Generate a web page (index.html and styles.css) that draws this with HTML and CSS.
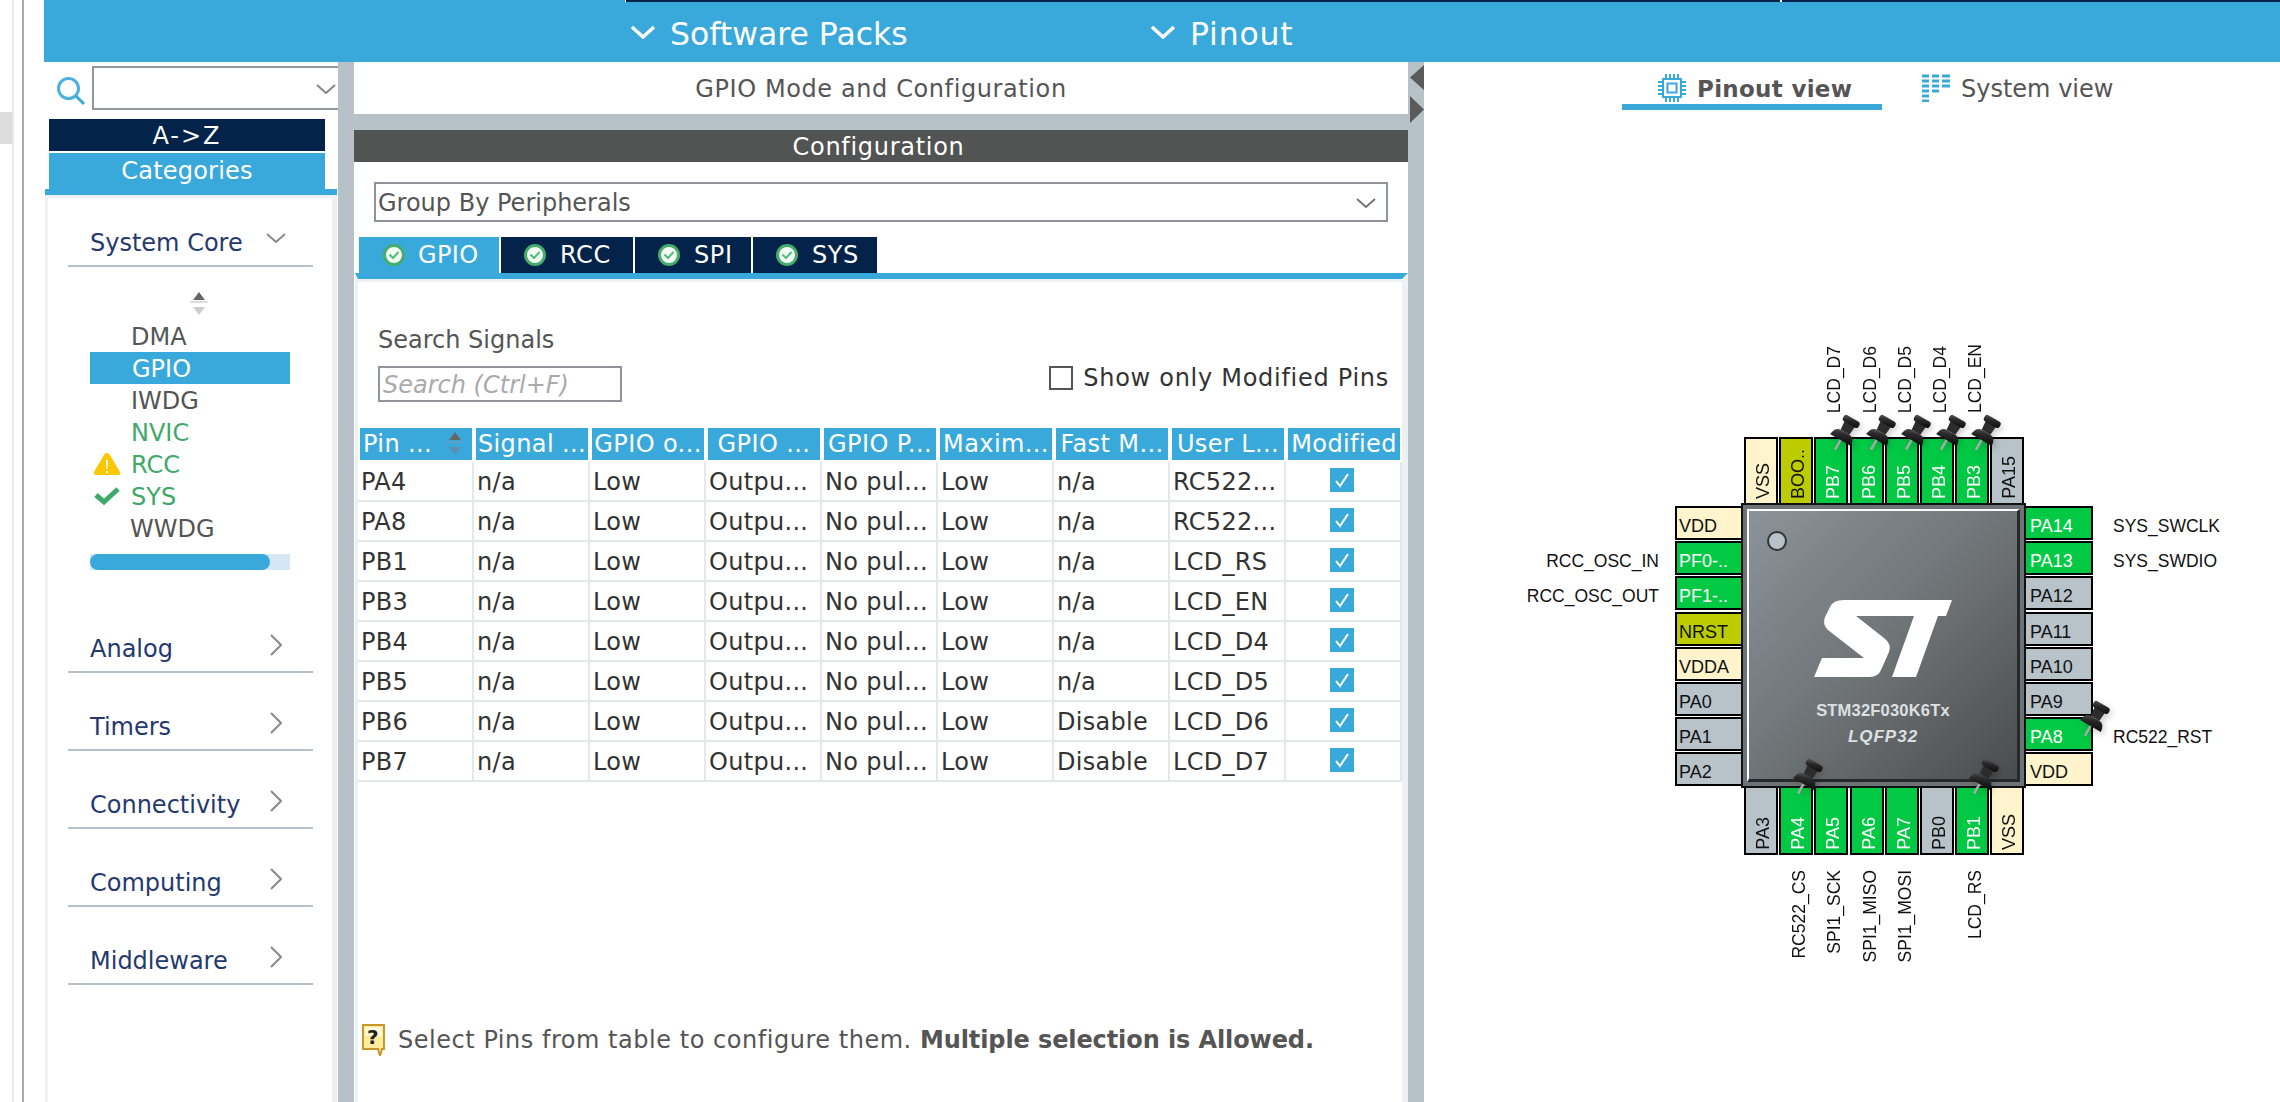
FILE: index.html
```html
<!DOCTYPE html>
<html lang="en">
<head>
<meta charset="utf-8">
<title>STM32CubeMX Pinout</title>
<link rel="stylesheet" href="styles.css">
</head>
<body>
<svg class="defs" width="0" height="0" aria-hidden="true">
  <defs>
    <linearGradient id="pinHead" x1="0" y1="0" x2="1" y2="1">
      <stop offset="0" stop-color="#5c5c5c"/><stop offset=".4" stop-color="#2a2a2a"/><stop offset="1" stop-color="#0a0a0a"/>
    </linearGradient>
    <symbol id="pushpin" viewBox="0 -2 34 38">
      <g transform="rotate(30 16 18)">
        <line x1="16" y1="24" x2="16" y2="36" stroke="#a8a8a8" stroke-width="2.500"/>
        <path d="M10 5H22L21 16H11Z" fill="#2c2c2c"/>
        <rect x="7" y="0" width="18" height="7" rx="3" fill="url(#pinHead)"/>
        <path d="M4 25Q5 16 11 16H21Q27 16 28 25Z" fill="url(#pinHead)"/>
      </g>
    </symbol>
    <symbol id="tabok" viewBox="0 0 22 22">
      <circle cx="11" cy="11" r="9.500" fill="#f2faf4" stroke="#45ad6c" stroke-width="3"/>
      <path d="M6.500 10.500L10 14L15.500 8" fill="none" stroke="#4fbe7b" stroke-width="2"/>
    </symbol>
    <symbol id="tick" viewBox="0 0 24 24">
      <rect width="24" height="24" fill="#39a9dc"/>
      <path d="M6 13L10 18L18 6" fill="none" stroke="#fff" stroke-width="2"/>
    </symbol>
    <symbol id="sortarrows" viewBox="0 0 18 24">
      <path d="M9 0L15 8H3Z" fill="#666"/>
      <path d="M0 9H18V11H0Z" fill="#ddd"/>
      <path d="M9 23L3 15H15Z" fill="#ccc"/>
    </symbol>
  </defs>
</svg>

<div class="page">
  <div class="edge"><div class="edge-stub"></div></div>
  <div class="app">
    <header class="topbar">
      <div class="topstrip"><span class="strip-a"></span><span class="strip-b"></span></div>
      <div class="topmenu">
        <div class="topitem topitem-sw">
          <svg class="topchev" viewBox="0 0 26 14"><path d="M2 2L13 12L24 2" fill="none" stroke="#fff" stroke-width="3.500"/></svg>
          <span>Software Packs</span>
        </div>
        <div class="topitem">
          <svg class="topchev" viewBox="0 0 26 14"><path d="M2 2L13 12L24 2" fill="none" stroke="#fff" stroke-width="3.500"/></svg>
          <span>Pinout</span>
        </div>
      </div>
    </header>

    <div class="workspace">
      <aside class="sidebar">
        <div class="searchrow">
          <svg class="searchicon" viewBox="0 0 30 30"><circle cx="12.500" cy="12.500" r="10" fill="none" stroke="#4cb0e0" stroke-width="3"/><path d="M20 20L28 28" stroke="#39a9dc" stroke-width="3"/></svg>
          <div class="sidecombo">
            <svg class="combochev" viewBox="0 0 20 10"><path d="M1 1L10 9L19 1" fill="none" stroke="#888" stroke-width="2"/></svg>
          </div>
        </div>
        <div class="sort-a">A-&gt;Z</div>
        <div class="sort-c">Categories</div>
        <div class="catpanel">
          <div class="cat cat-first">
            <span>System Core</span>
            <svg class="chev-down" viewBox="0 0 20 10"><path d="M1 1L10 9L19 1" fill="none" stroke="#8a8a8a" stroke-width="2"/></svg>
          </div>
          <svg class="listsort" viewBox="0 0 18 24"><use href="#sortarrows"/></svg>
          <ul class="periph">
            <li>DMA</li>
            <li class="sel">GPIO</li>
            <li>IWDG</li>
            <li class="ok">NVIC</li>
            <li class="ok">
              <svg class="mark" viewBox="0 0 26 22"><path d="M13 0Q15 0 16 2L26 19Q27 22 24 22H2Q-1 22 0 19L10 2Q11 0 13 0Z" fill="#fdc700"/><path d="M12 7H14L13.600 16H12.400ZM12 18H14V20H12Z" fill="#fff"/></svg>RCC
            </li>
            <li class="ok">
              <svg class="mark" viewBox="0 0 26 20"><path d="M2 9L10 16L24 3" fill="none" stroke="#3fa96a" stroke-width="5"/></svg>SYS
            </li>
            <li class="wide">WWDG</li>
          </ul>
          <div class="progress"><div class="progress-fill"></div></div>
          <div class="cat cat-analog"><span>Analog</span><svg class="chev-right" viewBox="0 0 12 22"><path d="M1 1L11 11L1 21" fill="none" stroke="#8a8a8a" stroke-width="2"/></svg></div>
          <div class="cat"><span>Timers</span><svg class="chev-right" viewBox="0 0 12 22"><path d="M1 1L11 11L1 21" fill="none" stroke="#8a8a8a" stroke-width="2"/></svg></div>
          <div class="cat"><span>Connectivity</span><svg class="chev-right" viewBox="0 0 12 22"><path d="M1 1L11 11L1 21" fill="none" stroke="#8a8a8a" stroke-width="2"/></svg></div>
          <div class="cat"><span>Computing</span><svg class="chev-right" viewBox="0 0 12 22"><path d="M1 1L11 11L1 21" fill="none" stroke="#8a8a8a" stroke-width="2"/></svg></div>
          <div class="cat"><span>Middleware</span><svg class="chev-right" viewBox="0 0 12 22"><path d="M1 1L11 11L1 21" fill="none" stroke="#8a8a8a" stroke-width="2"/></svg></div>
        </div>
      </aside>

      <div class="splitter"></div>

      <main class="middle">
        <div class="modetitle">GPIO Mode and Configuration</div>
        <div class="band"></div>
        <div class="confighead">Configuration</div>
        <div class="groupcombo">
          <span>Group By Peripherals</span>
          <svg class="groupchev" viewBox="0 0 20 10"><path d="M1 1L10 9L19 1" fill="none" stroke="#777" stroke-width="2"/></svg>
        </div>
        <div class="tabs">
          <div class="tab tab-gpio"><svg class="tabicon"><use href="#tabok"/></svg>GPIO</div>
          <div class="tab tab-rcc"><svg class="tabicon"><use href="#tabok"/></svg>RCC</div>
          <div class="tab tab-spi"><svg class="tabicon"><use href="#tabok"/></svg>SPI</div>
          <div class="tab tab-sys"><svg class="tabicon"><use href="#tabok"/></svg>SYS</div>
        </div>
        <section class="tabbody">
          <div class="searchsignals">
            <div>
              <div class="signals-label">Search Signals</div>
              <div class="signals-input">Search (Ctrl+F)</div>
            </div>
            <label class="showonly"><span class="emptybox"></span><span class="showtext">Show only Modified Pins</span></label>
          </div>
          <div class="thead">
            <div class="th th-pin">Pin ...<svg class="thsort" viewBox="0 0 18 24"><path d="M9 0L15 8H3Z" fill="#666"/><path d="M0 9H18V11H0Z" fill="#5c9fc4"/><path d="M9 23L3 15H15Z" fill="#5b90ae"/></svg></div>
            <div class="th">Signal ...</div>
            <div class="th">GPIO o...</div>
            <div class="th">GPIO ...</div>
            <div class="th">GPIO P...</div>
            <div class="th">Maxim...</div>
            <div class="th">Fast M...</div>
            <div class="th">User L...</div>
            <div class="th">Modified</div>
          </div>
          <div class="tr"><div>PA4</div><div>n/a</div><div>Low</div><div>Outpu...</div><div>No pul...</div><div>Low</div><div>n/a</div><div>RC522...</div><div class="td-check"><svg class="tick"><use href="#tick"/></svg></div></div>
          <div class="tr"><div>PA8</div><div>n/a</div><div>Low</div><div>Outpu...</div><div>No pul...</div><div>Low</div><div>n/a</div><div>RC522...</div><div class="td-check"><svg class="tick"><use href="#tick"/></svg></div></div>
          <div class="tr"><div>PB1</div><div>n/a</div><div>Low</div><div>Outpu...</div><div>No pul...</div><div>Low</div><div>n/a</div><div>LCD_RS</div><div class="td-check"><svg class="tick"><use href="#tick"/></svg></div></div>
          <div class="tr"><div>PB3</div><div>n/a</div><div>Low</div><div>Outpu...</div><div>No pul...</div><div>Low</div><div>n/a</div><div>LCD_EN</div><div class="td-check"><svg class="tick"><use href="#tick"/></svg></div></div>
          <div class="tr"><div>PB4</div><div>n/a</div><div>Low</div><div>Outpu...</div><div>No pul...</div><div>Low</div><div>n/a</div><div>LCD_D4</div><div class="td-check"><svg class="tick"><use href="#tick"/></svg></div></div>
          <div class="tr"><div>PB5</div><div>n/a</div><div>Low</div><div>Outpu...</div><div>No pul...</div><div>Low</div><div>n/a</div><div>LCD_D5</div><div class="td-check"><svg class="tick"><use href="#tick"/></svg></div></div>
          <div class="tr"><div>PB6</div><div>n/a</div><div>Low</div><div>Outpu...</div><div>No pul...</div><div>Low</div><div>Disable</div><div>LCD_D6</div><div class="td-check"><svg class="tick"><use href="#tick"/></svg></div></div>
          <div class="tr"><div>PB7</div><div>n/a</div><div>Low</div><div>Outpu...</div><div>No pul...</div><div>Low</div><div>Disable</div><div>LCD_D7</div><div class="td-check"><svg class="tick"><use href="#tick"/></svg></div></div>
          <div class="hint">
            <svg class="hinticon" viewBox="0 0 25 32"><path d="M2 1H23V25H21L19 32L17 25H2Z" fill="#ffeb9c" stroke="#c9962a" stroke-width="2"/><path d="M4 3H21V12H4Z" fill="#fff8d4"/></svg>
            <span class="hintq">?</span>
            <span class="hinttext">Select Pins from table to configure them. <b>Multiple selection is Allowed.</b></span>
          </div>
        </section>
      </main>

      <div class="splitter splitter-right">
        <svg class="collapse" viewBox="0 0 14 25"><path d="M14 0V25L0 12.500Z" fill="#5a5a5a"/></svg>
        <svg class="expand" viewBox="0 0 14 27"><path d="M0 0V27L14 13.500Z" fill="#5a5a5a"/></svg>
      </div>

      <section class="pinout">
        <nav class="viewtabs">
          <div class="viewtab viewtab-on">
            <svg class="viewicon" viewBox="0 0 28 28"><rect x="5" y="5" width="18" height="18" fill="none" stroke="#39a9dc" stroke-width="2"/><rect x="9.500" y="9.500" width="9" height="9" fill="none" stroke="#39a9dc" stroke-width="2"/><path d="M8 0V4M12 0V4M16 0V4M20 0V4M8 24V28M12 24V28M16 24V28M20 24V28M0 8H4M0 12H4M0 16H4M0 20H4M24 8H28M24 12H28M24 16H28M24 20H28" stroke="#39a9dc" stroke-width="2"/></svg>
            <span>Pinout view</span>
          </div>
          <div class="viewtab">
            <svg class="viewicon" viewBox="0 0 28 28"><path d="M0 2H7M10 2H17M20 2H28M0 7H7M10 7H17M20 7H28M0 12H7M10 12H17M20 12H28M0 17H7M10 17H17M0 22H7M0 27H7" stroke="#39a9dc" stroke-width="3"/></svg>
            <span>System view</span>
          </div>
        </nav>

        <div class="package">
          <div class="toplabels">
            <span class="vlab-slot"></span><span class="vlab-slot"></span>
            <span class="vlab-slot"><span class="vtext">LCD_D7</span></span>
            <span class="vlab-slot"><span class="vtext">LCD_D6</span></span>
            <span class="vlab-slot"><span class="vtext">LCD_D5</span></span>
            <span class="vlab-slot"><span class="vtext">LCD_D4</span></span>
            <span class="vlab-slot"><span class="vtext">LCD_EN</span></span>
            <span class="vlab-slot"></span>
          </div>
          <div class="pins-top">
            <div class="pin pin-t power"><span class="vtext">VSS</span></div>
            <div class="pin pin-t boot"><span class="vtext">BOO..</span></div>
            <div class="pin pin-t on"><span class="vtext">PB7</span><svg class="pushpin pp-top"><use href="#pushpin"/></svg></div>
            <div class="pin pin-t on"><span class="vtext">PB6</span><svg class="pushpin pp-top"><use href="#pushpin"/></svg></div>
            <div class="pin pin-t on"><span class="vtext">PB5</span><svg class="pushpin pp-top"><use href="#pushpin"/></svg></div>
            <div class="pin pin-t on"><span class="vtext">PB4</span><svg class="pushpin pp-top"><use href="#pushpin"/></svg></div>
            <div class="pin pin-t on"><span class="vtext">PB3</span><svg class="pushpin pp-top"><use href="#pushpin"/></svg></div>
            <div class="pin pin-t free"><span class="vtext">PA15</span></div>
          </div>

          <div class="hlabels hlabels-left">
            <span></span><span>RCC_OSC_IN</span><span>RCC_OSC_OUT</span><span></span><span></span><span></span><span></span><span></span>
          </div>
          <div class="pins-left">
            <div class="pin pin-l power">VDD</div>
            <div class="pin pin-l on">PF0-..</div>
            <div class="pin pin-l on">PF1-..</div>
            <div class="pin pin-l boot">NRST</div>
            <div class="pin pin-l power">VDDA</div>
            <div class="pin pin-l free">PA0</div>
            <div class="pin pin-l free">PA1</div>
            <div class="pin pin-l free">PA2</div>
          </div>
          <div class="chip">
            <div class="die">
              <span class="dot"></span>
              <svg class="stlogo" viewBox="0 0 138 77"><path d="M30 0H138L132 16H124L102 77H78L100 16H42L70 38Q78 44 75 52L67 70Q64 77 56 77H0L8 58H50L14 30Q8 24 11 17L16 7Q19 0 30 0Z" fill="#fff"/></svg>
              <div class="partno">STM32F030K6Tx</div>
              <div class="partpkg">LQFP32</div>
            </div>
          </div>
          <div class="pins-right">
            <div class="pin pin-r on">PA14</div>
            <div class="pin pin-r on">PA13</div>
            <div class="pin pin-r free">PA12</div>
            <div class="pin pin-r free">PA11</div>
            <div class="pin pin-r free">PA10</div>
            <div class="pin pin-r free">PA9</div>
            <div class="pin pin-r on">PA8<svg class="pushpin pp-right"><use href="#pushpin"/></svg></div>
            <div class="pin pin-r power">VDD</div>
          </div>
          <div class="hlabels hlabels-right">
            <span>SYS_SWCLK</span><span>SYS_SWDIO</span><span></span><span></span><span></span><span></span><span>RC522_RST</span><span></span>
          </div>

          <div class="pins-bottom">
            <div class="pin pin-b free"><span class="vtext">PA3</span></div>
            <div class="pin pin-b on"><span class="vtext">PA4</span><svg class="pushpin pp-bottom"><use href="#pushpin"/></svg></div>
            <div class="pin pin-b on"><span class="vtext">PA5</span></div>
            <div class="pin pin-b on"><span class="vtext">PA6</span></div>
            <div class="pin pin-b on"><span class="vtext">PA7</span></div>
            <div class="pin pin-b free"><span class="vtext">PB0</span></div>
            <div class="pin pin-b on"><span class="vtext">PB1</span><svg class="pushpin pp-bottom"><use href="#pushpin"/></svg></div>
            <div class="pin pin-b power"><span class="vtext">VSS</span></div>
          </div>

          <div class="bottomlabels">
            <span class="vlab-slot"></span>
            <span class="vlab-slot"><span class="vtext">RC522_CS</span></span>
            <span class="vlab-slot"><span class="vtext">SPI1_SCK</span></span>
            <span class="vlab-slot"><span class="vtext">SPI1_MISO</span></span>
            <span class="vlab-slot"><span class="vtext">SPI1_MOSI</span></span>
            <span class="vlab-slot"></span>
            <span class="vlab-slot"><span class="vtext">LCD_RS</span></span>
            <span class="vlab-slot"></span>
          </div>
        </div>
      </section>
    </div>
  </div>
</div>
</body>
</html>
```
FILE: styles.css
```css
* { box-sizing: border-box; }
html, body { margin: 0; padding: 0; }
body {
  width: 2280px;
  height: 1102px;
  overflow: hidden;
  background: #fff;
  font-family: "DejaVu Sans", "Open Sans", sans-serif;
  font-size: 24px;
  color: #555;
}
.defs { position: absolute; }
.page { display: flex; height: 1102px; }

/* window edge */
.edge {
  width: 44px;
  flex: none;
  position: relative;
  background:
    linear-gradient(#e9e9e9, #e9e9e9) 12px 0 / 2px 100% no-repeat,
    linear-gradient(#aaa, #aaa) 22px 0 / 2px 100% no-repeat;
}
.edge-stub { position: absolute; left: 0; top: 112px; width: 12px; height: 32px; background: #ddd; }

.app { flex: 1; display: flex; flex-direction: column; min-width: 0; }

/* top bar */
.topbar { height: 62px; flex: none; background: #39a9dc; color: #fff; }
.topstrip { height: 2px; padding-left: 581px; display: flex; }
.strip-a { width: 1155px; background: #03234b; border-left: 1px solid #fff; }
.strip-b { flex: 1; background: #03234b; border-left: 2px solid #fff; }
.topmenu { display: flex; height: 60px; padding-left: 586px; align-items: center; }
.topitem { display: flex; align-items: center; gap: 14px; font-size: 31.5px; line-height: 44px; }
.topitem span { padding-top: 3px; }
.topitem-sw { width: 520px; }
.topitem:last-child span { letter-spacing: .8px; }
.topchev { width: 26px; height: 14px; flex: none; }

.workspace { flex: 1; display: flex; min-height: 0; }

/* sidebar */
.sidebar { width: 294px; flex: none; overflow: hidden; display: flex; flex-direction: column; }
.searchrow { height: 57px; display: flex; padding-top: 4px; flex: none; }
.searchicon { width: 30px; height: 30px; margin: 10px 0 0 12px; flex: none; }
.sidecombo {
  width: 260px; height: 44px; margin-left: 6px; flex: none;
  border: 2px solid #92979b; position: relative;
}
.combochev { position: absolute; left: 222px; top: 16px; width: 20px; height: 10px; }
.sort-a, .sort-c { margin-left: 5px; width: 276px; text-align: center; color: #fff; flex: none; }
.sort-a { height: 32px; line-height: 35px; background: #03234b; letter-spacing: 2px; }
.sort-c { height: 36px; line-height: 36px; margin-top: 2px; background: #39a9dc; letter-spacing: .2px; }
.catpanel {
  flex: 1; margin-left: 1px; width: 292px;
  border-top: 6px solid #39a9dc;
  background: #fff;
  box-shadow: inset 3px 3px 0 #eef1f3, inset -5px 0 0 #eef1f3;
  display: flex; flex-direction: column;
}
.cat {
  height: 40px; flex: none; margin: 0 24px 0 23px; padding-left: 22px;
  border-bottom: 2px solid #b5c1cc;
  display: flex; align-items: flex-start; justify-content: space-between;
  color: #25396e; line-height: 33px; margin-bottom: 38px; position: relative;
}
.cat-first { margin-top: 32px; margin-bottom: 0; }
.cat-analog { margin-top: 63px; }
.chev-down { width: 20px; height: 10px; position: absolute; left: 198px; top: 6px; }
.chev-right { width: 12px; height: 22px; position: absolute; left: 202px; top: 1px; }
.listsort { width: 18px; height: 24px; margin: 25px 0 0 145px; flex: none; }
.periph { list-style: none; margin: 4px 0 0 45px; padding: 0; width: 200px; }
.periph li {
  height: 32px; line-height: 35px; padding-left: 41px; position: relative;
  color: #555;
}
.periph li.sel { background: #39a9dc; color: #fff; padding-left: 42px; }
.periph li.ok { color: #3fa96a; }
.periph li.wide { padding-left: 40px; }
.mark { position: absolute; left: 4px; top: 5px; width: 26px; height: 22px; }
.progress { width: 200px; height: 16px; margin: 10px 0 0 45px; background: #d6e6f4; flex: none; }
.progress-fill { width: 180px; height: 16px; background: #39a9dc; border-radius: 8px; }

/* splitters */
.splitter { width: 16px; flex: none; background: #b7c1c8; }
.splitter-right { position: relative; }
.collapse, .expand { position: absolute; left: 2px; width: 14px; }
.collapse { top: 3px; height: 25px; }
.expand { top: 34px; height: 27px; }

/* middle */
.middle { width: 1054px; flex: none; display: flex; flex-direction: column; }
.modetitle { height: 52px; line-height: 55px; text-align: center; letter-spacing: .6px; flex: none; }
.band { height: 16px; background: #b7c1c8; flex: none; }
.confighead { height: 32px; line-height: 35px; background: #525353; color: #fff; text-align: center; flex: none; letter-spacing: .7px; padding-right: 5px; }
.groupcombo {
  height: 40px; margin: 20px 20px 0 20px; border: 2px solid #8e9499;
  padding: 0 0 0 2px; line-height: 38px; position: relative; flex: none;
}
.groupchev { position: absolute; right: 10px; top: 14px; width: 20px; height: 10px; }
.tabs { display: flex; gap: 2px; margin: 15px 0 0 5px; height: 36px; flex: none; }
.tab {
  display: flex; align-items: center; gap: 14px; height: 36px; line-height: 38px;
  padding-left: 23px; background: #03234b; color: #fff; letter-spacing: .6px;
}
.tab-gpio { width: 140px; background: #39a9dc; padding-left: 24px; gap: 13px; letter-spacing: .4px; }
.tab-rcc { width: 132px; }
.tab-spi { width: 116px; }
.tab-sys { width: 124px; }
.tabicon { width: 22px; height: 22px; flex: none; }
.tabbody {
  flex: 1; margin-left: 1px;
  border-top: 6px solid #39a9dc;
  border-left: 3px solid #eef1f3;
  border-right: 6px solid #eef1f3;
  box-shadow: inset 0 3px 0 #eef1f3;
  display: flex; flex-direction: column;
}
.searchsignals { display: flex; justify-content: space-between; margin: 43px 13px 0 20px; height: 80px; flex: none; }
.signals-label { height: 32px; line-height: 37px; }
.signals-input {
  width: 244px; height: 36px; margin-top: 12px; border: 2px solid #8e9499;
  font-style: italic; color: #aaa; line-height: 34px; padding-left: 3px;
}
.showonly { display: flex; align-items: center; gap: 10px; margin-top: 44px; height: 24px; color: #333; }
.showtext { letter-spacing: .72px; line-height: 28px; }
.emptybox { width: 24px; height: 24px; border: 2px solid #555; flex: none; }
.thead { display: grid; grid-template-columns: repeat(9, 112px); gap: 4px; margin: 26px 0 0 2px; flex: none; }
.th {
  height: 32px; background: #39a9dc; color: #fff; text-align: center; line-height: 33px;
  overflow: hidden; white-space: nowrap; position: relative; letter-spacing: .4px;
}
.th-pin { text-align: left; padding-left: 3px; }
.thsort { position: absolute; right: 8px; top: 4px; width: 18px; height: 24px; }
.tr { display: grid; grid-template-columns: repeat(9, 116px); flex: none; height: 40px; color: #333; }
.thead + .tr { margin-top: 2px; }
.tr > div {
  height: 40px; line-height: 40px; padding-left: 3px; white-space: nowrap; overflow: hidden; letter-spacing: .3px;
  border-right: 2px solid #e4e8eb; border-bottom: 2px solid #e4e8eb;
}
.tr > .td-check { padding: 6px 0 0 44px; }
.tick { width: 24px; height: 24px; display: block; }
.hint { display: flex; align-items: center; margin: 242px 0 0 3px; height: 32px; position: relative; }
.hinticon { width: 25px; height: 32px; margin-right: 12px; flex: none; }
.hintq { position: absolute; left: 6px; top: -1px; font-weight: 700; color: #222; font-size: 20px; line-height: 28px; }
.hinttext { letter-spacing: .53px; line-height: 36px; white-space: nowrap; }
.hinttext b { letter-spacing: -.1px; }

/* pinout */
.pinout { flex: 1; min-width: 0; }
.viewtabs { display: flex; padding-left: 198px; height: 48px; }
.viewtab { width: 260px; display: flex; gap: 11px; padding: 12px 0 0 36px; height: 48px; }
.viewtab + .viewtab { padding-left: 40px; }
.viewtab span { line-height: 30px; }
.viewtab-on { border-bottom: 6px solid #39a9dc; font-weight: 700; font-size: 23px; letter-spacing: .3px; }
.viewicon { width: 28px; height: 28px; flex: none; }

.package {
  display: grid;
  grid-template-columns: 175px 66px 285px 67px 170px;
  grid-template-rows: 91px 66px 285px 67px 110px;
  margin: 236px 0 0 76px;
  font-family: "Liberation Sans", Arial, sans-serif;
  font-size: 17.5px;
  color: #111;
}
.toplabels { grid-column: 3; grid-row: 1; }
.pins-top { grid-column: 3; grid-row: 2; }
.hlabels-left { grid-column: 1; grid-row: 3; }
.pins-left { grid-column: 2; grid-row: 3; }
.chip { grid-column: 3; grid-row: 3; }
.pins-right { grid-column: 4; grid-row: 3; }
.hlabels-right { grid-column: 5; grid-row: 3; }
.pins-bottom { grid-column: 3; grid-row: 4; }
.bottomlabels { grid-column: 3; grid-row: 5; }

.vtext { writing-mode: vertical-rl; transform: rotate(180deg); white-space: nowrap; line-height: 20px; }
.toplabels, .bottomlabels, .pins-top, .pins-bottom { display: flex; gap: 1.2px; padding-left: 3px; }
.vlab-slot { width: 34px; display: flex; justify-content: center; padding-left: 6px; flex: none; }
.toplabels .vlab-slot { align-items: flex-end; padding-bottom: 24px; }
.bottomlabels .vlab-slot { padding-top: 15px; align-items: flex-start; }
.hlabels { display: flex; flex-direction: column; gap: 1.2px; padding-top: 3px; }
.hlabels span { height: 34px; line-height: 41px; white-space: nowrap; }
.hlabels-left { text-align: right; padding-right: 16px; }
.hlabels-right { padding-left: 20px; }
.pins-left, .pins-right { display: flex; flex-direction: column; gap: 1.2px; padding-top: 3px; }

.pin { font-size: 18px; position: relative; flex: none; border: 2px solid #000; }
.power { background: #fff4cc; color: #111; }
.boot { background: #bccc00; color: #111; }
.on { background: #02c944; color: #fff; }
.free { background: #b7c2c9; color: #111; }
.pin-t, .pin-b { width: 34px; display: flex; justify-content: center; align-items: flex-end; padding-left: 4px; }
.pin-t { border-bottom: 0; padding-bottom: 4px; }
.pin-b { border-top: 0; padding-bottom: 3px; }
.pin-l, .pin-r { height: 34px; line-height: 36px; white-space: nowrap; padding-left: 2px; }
.pin-l { border-right: 0; }
.pin-r { border-left: 0; padding-left: 4px; }

.pushpin { position: absolute; width: 34px; height: 38px; z-index: 2; filter: drop-shadow(2px 3px 3px rgba(0,0,0,.2)); }
.pp-top { left: 12px; top: -25px; }
.pp-bottom { left: 10px; top: -30px; }
.pp-right { left: 52px; top: -19px; }

.chip { background: #6c7378; border: 2px solid #111; padding: 4px; }
.die {
  height: 100%;
  border-top: 2px solid #fff; border-left: 2px solid #fff;
  border-right: 3px solid #26282a; border-bottom: 3px solid #26282a;
  background: linear-gradient(135deg, #8b939a 0%, #6f7477 50%, #4a4c4d 100%);
  display: flex; flex-direction: column; align-items: center;
  padding-top: 89px; position: relative; color: #dde0e2;
}
.dot { position: absolute; left: 18px; top: 20px; width: 20px; height: 20px; border-radius: 50%; background: #b7c2c9; border: 2px solid #333; }
.stlogo { width: 138px; height: 77px; flex: none; }
.partno { font-weight: 700; font-size: 16.5px; line-height: 20px; margin-top: 23px; letter-spacing: .2px; }
.partpkg { font-weight: 700; font-style: italic; font-size: 17px; line-height: 20px; margin-top: 7px; letter-spacing: 1px; }
```
